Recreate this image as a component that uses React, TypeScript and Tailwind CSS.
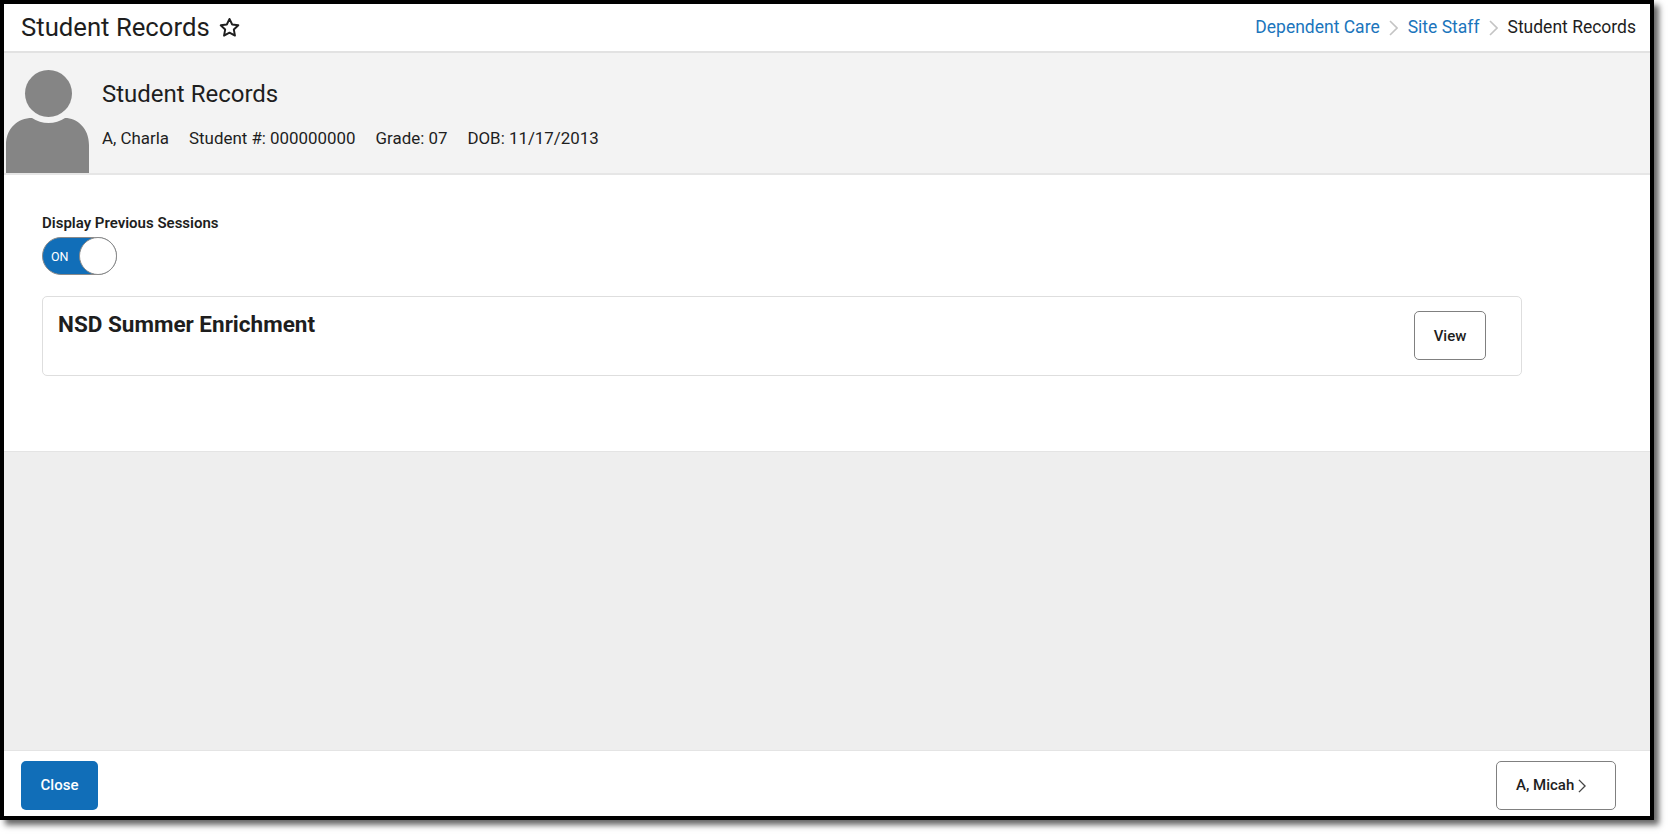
import React from "react";

const Chevron = ({ className }: { className: string }) => (
  <svg viewBox="0 0 9 16" className={className} fill="none" stroke="currentColor" strokeWidth="1.6">
    <path d="M1 1l7 7-7 7" />
  </svg>
);

export default function App() {
  return (
    <div className="w-[1669px] h-[835px] bg-white font-['Roboto',sans-serif] text-[#1e1e1e]">
      <div className="w-[1654px] h-[820px] border-4 border-black shadow-[5px_5px_6px_#666] flex flex-col bg-[#eeeeee]">
        <header className="h-[49px] shrink-0 bg-white border-b-2 border-[#e2e2e2] flex items-center justify-between pl-[17px] pr-[14px]">
          <div className="flex items-center gap-[8px]">
            <h1 className="text-[25.7px] font-normal leading-none">Student Records</h1>
            <svg viewBox="0 0 24 24" className="w-[23px] h-[23px]" fill="none" stroke="#1e1e1e" strokeWidth="2" strokeLinejoin="round">
              <path d="M12 3l2.8 5.9 6.4.8-4.7 4.4 1.2 6.4L12 17.4l-5.7 3.1 1.2-6.4-4.7-4.4 6.4-.8z" />
            </svg>
          </div>
          <nav className="flex items-center text-[17.5px]">
            <span className="text-[#1b75bc]">Dependent Care</span>
            <Chevron className="w-[9px] h-[16px] mx-[9.5px] text-[#c4c4c4]" />
            <span className="text-[#1b75bc]">Site Staff</span>
            <Chevron className="w-[9px] h-[16px] mx-[9.5px] text-[#c4c4c4]" />
            <span>Student Records</span>
          </nav>
        </header>

        <section className="h-[122px] shrink-0 bg-[#f3f3f3] border-b-2 border-[#e6e6e6] flex">
          <svg viewBox="0 0 83 103" className="w-[83px] h-[103px] ml-[2px] mt-[17px] self-start shrink-0">
            <circle cx="42.5" cy="23.5" r="23.5" fill="#858585" />
            <path d="M0 103V75C0 58 12 48 26 48A29.5 29.5 0 0 0 59 48C71 48 83 58 83 75V103Z" fill="#858585" />
          </svg>
          <div className="ml-[13px] pt-[26px]">
            <h2 className="text-[24px] font-normal leading-[30px]">Student Records</h2>
            <div className="flex gap-[20px] text-[16.9px] leading-[20px] mt-[19px]">
              <span>A, Charla</span>
              <span>Student #: 000000000</span>
              <span>Grade: 07</span>
              <span>DOB: 11/17/2013</span>
            </div>
          </div>
        </section>

        <main className="h-[277px] shrink-0 bg-white border-b border-[#e4e4e4] pl-[38px] pt-[39px]">
          <div className="text-[15px] font-semibold leading-[18px]">Display Previous Sessions</div>
          <div className="mt-[5px] w-[75px] h-[38px] rounded-full bg-[#116eb8] border border-[#8a8a8a] flex items-center relative">
            <span className="pl-[8px] pt-[2px] text-[12.5px] text-white">ON</span>
            <span className="absolute -right-px -top-px w-[38px] h-[38px] rounded-full bg-white border border-[#8a8a8a]" />
          </div>
          <div className="mt-[21px] w-[1480px] h-[80px] border border-[#dedede] rounded-[5px] flex items-start justify-between pl-[15px] pr-[35px] pt-[14px]">
            <h3 className="text-[22.5px] font-bold leading-[24px] mt-px">NSD Summer Enrichment</h3>
            <button className="w-[72px] h-[49px] rounded-[5px] border border-[#808080] bg-white text-[15px] font-medium pt-px">View</button>
          </div>
        </main>

        <div className="flex-1" />

        <footer className="h-[66px] shrink-0 bg-white border-t border-[#e4e4e4] flex items-start justify-between pl-[17px] pr-[34px] pt-[10px]">
          <button className="w-[77px] h-[49px] rounded-[5px] bg-[#116eb8] text-white text-[15px] font-medium">Close</button>
          <button className="w-[120px] h-[49px] rounded-[5px] border border-[#808080] bg-white text-[15px] font-medium flex items-center pl-[19px] gap-[4px]">
            A, Micah
            <Chevron className="w-[8px] h-[14px] text-[#444444]" />
          </button>
        </footer>
      </div>
    </div>
  );
}
